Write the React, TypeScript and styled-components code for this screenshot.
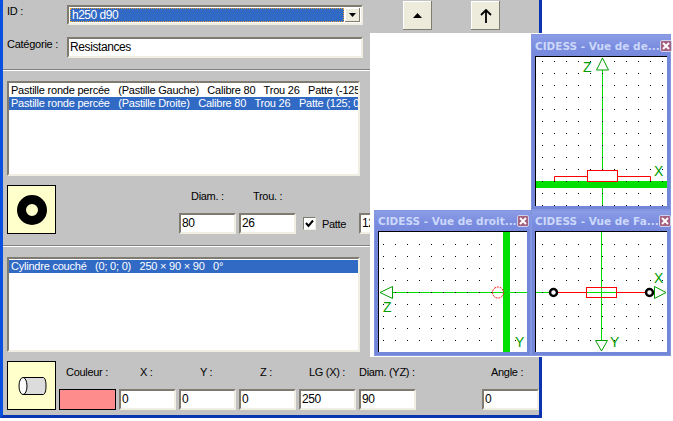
import React from 'react';
import styled, { createGlobalStyle } from 'styled-components';

const GlobalStyle = createGlobalStyle`
  html, body {
    margin: 0;
    padding: 0;
    background: #fff;
    overflow: hidden;
  }
  body {
    font-family: 'Liberation Sans', Arial, sans-serif;
    font-size: 11px;
    color: #000;
  }
`;

const Page = styled.div`
  position: relative;
  width: 673px;
  height: 421px;
  overflow: hidden;
`;

const MainWindow = styled.div`
  width: 542px;
  height: 418px;
  box-sizing: border-box;
  background: #c3c3c3;
  border-left: 3px solid #0a50e0;
  border-right: 3px solid #0a34b0;
  border-bottom: 3px solid #0a34b0;
  display: flex;
  flex-direction: column;
`;

const TopSection = styled.div`
  height: 69px;
  flex: none;
  box-sizing: border-box;
  padding: 1px 0 0 4px;
  display: flex;
  align-items: flex-start;
`;

const TopFields = styled.div`
  width: 356px;
  flex: none;
  margin-top: 4px;
  display: flex;
  flex-direction: column;
  gap: 12px;
`;

const Divider = styled.div`
  height: 1px;
  flex: none;
  background: #808080;
  border-bottom: 1px solid #fff;
`;

const FieldRow = styled.div`
  display: flex;
  align-items: center;
`;

const RowLabel = styled.span`
  width: 60px;
  flex: none;
  padding-bottom: 7px;
  line-height: 13px;
  letter-spacing: -0.25px;
`;

const Combo = styled.div`
  width: 296px;
  height: 20px;
  box-sizing: border-box;
  background: #fff;
  border: 2px solid;
  border-color: #7f7b70 #f0eee2 #f0eee2 #7f7b70;
  padding: 1px;
  display: flex;
`;

const ComboValue = styled.div`
  flex: 1;
  box-sizing: border-box;
  background: #316ac5;
  color: #fff;
  outline: 1px dotted #e8a030;
  outline-offset: -1px;
  font-size: 12px;
  letter-spacing: -0.5px;
  line-height: 14px;
  padding-left: 2px;
`;

const ComboArrow = styled.div`
  width: 15px;
  margin-left: 1px;
  background: #ecebdc;
  box-shadow: inset -1px -1px 0 #807c70, inset 1px 1px 0 #fff;
  display: flex;
  align-items: center;
  justify-content: center;
`;

const TextInput = styled.div<{ $w?: number }>`
  width: ${p => p.$w ?? 57}px;
  height: 21px;
  flex: none;
  box-sizing: border-box;
  background: #fff;
  border: 2px solid;
  border-color: #7f7b70 #f0eee2 #f0eee2 #7f7b70;
  padding-left: 1px;
  font-size: 12px;
  letter-spacing: -0.4px;
  line-height: 17px;
  white-space: nowrap;
  overflow: hidden;
`;

const ToolButtons = styled.div`
  margin-left: 40px;
  display: flex;
  gap: 39px;
`;

const ToolButton = styled.div`
  width: 29px;
  height: 29px;
  box-sizing: border-box;
  background: #ecebdc;
  box-shadow: inset -1px -1px 0 #807c70, inset 1px 1px 0 #fff;
  display: flex;
  align-items: center;
  justify-content: center;
`;

const ListSection = styled.div`
  padding: 10px 0 0 4px;
  flex: none;
`;

const ListBox = styled.div`
  width: 353px;
  height: 95px;
  box-sizing: border-box;
  background: #fff;
  border: 2px solid;
  border-color: #7f7b70 #f0eee2 #f0eee2 #7f7b70;
  padding-top: 1px;
  overflow: hidden;
`;

const ListRow = styled.div<{ $selected?: boolean }>`
  height: 13px;
  line-height: 13px;
  padding-left: 2px;
  font-size: 11px;
  letter-spacing: -0.22px;
  white-space: pre;
  overflow: hidden;
  background: ${p => (p.$selected ? '#316ac5' : 'transparent')};
  color: ${p => (p.$selected ? '#fff' : '#000')};
`;

const EditorRow = styled.div<{ $bottom?: number }>`
  display: flex;
  flex: none;
  padding: 9px 0 ${p => p.$bottom ?? 0}px 4px;
`;

const Thumb = styled.div`
  width: 49px;
  height: 49px;
  flex: none;
  box-sizing: border-box;
  background: #ffffcc;
  border: 1px solid #000;
  display: flex;
  align-items: center;
  justify-content: center;
`;

const FieldsColumn = styled.div`
  display: flex;
  flex-direction: column;
`;

const LabelRow = styled.div<{ $pad: number }>`
  display: flex;
  height: 28px;
  box-sizing: border-box;
  align-items: center;
  padding: 0 0 6px ${p => p.$pad}px;
`;

const LabelCell = styled.span<{ $w: number; $indent: number }>`
  width: ${p => p.$w}px;
  padding-left: ${p => p.$indent}px;
  box-sizing: border-box;
  flex: none;
  font-size: 11px;
  letter-spacing: -0.3px;
  white-space: nowrap;
`;

const InputRow = styled.div<{ $pad: number }>`
  display: flex;
  align-items: center;
  gap: 3px;
  padding-left: ${p => p.$pad}px;
`;

const CheckField = styled.label`
  display: flex;
  align-items: center;
  gap: 6px;
  width: 53px;
  flex: none;
  margin-left: 4px;
  font-size: 11px;
  letter-spacing: -0.3px;
`;

const CheckBox = styled.span`
  width: 13px;
  height: 13px;
  flex: none;
  box-sizing: border-box;
  background: #fff;
  border: 1px solid #f0eee2;
  border-top-color: #7f7b70;
  border-left-color: #7f7b70;
  display: flex;
  align-items: center;
  justify-content: center;
`;

const ColorSwatch = styled.div`
  width: 57px;
  height: 21px;
  flex: none;
  box-sizing: border-box;
  background: #ff8c8c;
  border: 1px solid #000;
`;

const Spacer = styled.div<{ $w: number }>`
  width: ${p => p.$w}px;
  flex: none;
`;

const ViewsPanel = styled.div`
  position: absolute;
  left: 370px;
  top: 33px;
  width: 303px;
  height: 324px;
  background: #fff;
`;

const ViewWindow = styled.div<{ $x: number; $y: number; $w: number }>`
  position: absolute;
  left: ${p => p.$x}px;
  top: ${p => p.$y}px;
  width: ${p => p.$w}px;
  box-sizing: border-box;
  background: #7387d8;
  border: 1px solid #8496e0;
  padding: 0 3px 3px;
  display: flex;
  flex-direction: column;
`;

const TitleBar = styled.div<{ $h: number }>`
  height: ${p => p.$h}px;
  flex: none;
  margin: 0 -3px;
  padding: 0 2px 0 3px;
  background: linear-gradient(180deg, #8b9de6 0%, #7a8cdf 60%, #7789dc 100%);
  display: flex;
  align-items: center;
  justify-content: space-between;
`;

const TitleText = styled.span`
  color: #ccd8fa;
  font-family: 'DejaVu Sans', sans-serif;
  font-weight: bold;
  font-size: 10.5px;
  white-space: nowrap;
`;

const CloseButton = styled.span`
  width: 12px;
  height: 12px;
  flex: none;
  box-sizing: border-box;
  border: 1px solid #cdd2ee;
  border-radius: 2px;
  background: #a4607e;
  display: flex;
  align-items: center;
  justify-content: center;
`;

const CanvasFrame = styled.div`
  background: #fff;
  border-top: 1px solid #000;
  border-left: 1px solid #000;
  svg {
    display: block;
  }
`;

const GREEN = '#00e000';
const DARK = '#009c00';

function Dots({ x0, y0, w, h }: { x0: number; y0: number; w: number; h: number }) {
  const dots: React.ReactNode[] = [];
  for (let x = x0; x < w; x += 12) {
    for (let y = y0; y < h; y += 12) {
      dots.push(<rect key={`${x}-${y}`} x={x} y={y} width={1} height={1} fill="#000" />);
    }
  }
  return <>{dots}</>;
}

function AxisLabel({ x, y, children }: { x: number; y: number; children: string }) {
  return (
    <text x={x} y={y} fill={DARK} fontFamily="Liberation Sans, sans-serif" fontSize={14}>
      {children}
    </text>
  );
}

function Window({
  title,
  x,
  y,
  w,
  barHeight,
  viewW,
  viewH,
  children,
}: {
  title: string;
  x: number;
  y: number;
  w: number;
  barHeight: number;
  viewW: number;
  viewH: number;
  children: React.ReactNode;
}) {
  return (
    <ViewWindow $x={x} $y={y} $w={w}>
      <TitleBar $h={barHeight}>
        <TitleText>{title}</TitleText>
        <CloseButton>
          <svg width="8" height="8" viewBox="0 0 8 8">
            <path d="M1 1L7 7M7 1L1 7" stroke="#fff" strokeWidth="2" />
          </svg>
        </CloseButton>
      </TitleBar>
      <CanvasFrame>
        <svg width={viewW} height={viewH} viewBox={`0 0 ${viewW} ${viewH}`}>
          {children}
        </svg>
      </CanvasFrame>
    </ViewWindow>
  );
}

export default function App() {
  return (
    <Page>
      <GlobalStyle />
      <MainWindow>
        <TopSection>
          <TopFields>
            <FieldRow>
              <RowLabel>ID :</RowLabel>
              <Combo>
                <ComboValue>h250 d90</ComboValue>
                <ComboArrow>
                  <svg width="7" height="4" viewBox="0 0 7 4">
                    <path d="M0 0H7L3.5 4Z" fill="#000" />
                  </svg>
                </ComboArrow>
              </Combo>
            </FieldRow>
            <FieldRow>
              <RowLabel>Catégorie :</RowLabel>
              <TextInput $w={296}>Resistances</TextInput>
            </FieldRow>
          </TopFields>
          <ToolButtons>
            <ToolButton>
              <svg width="9" height="5" viewBox="0 0 9 5">
                <path d="M4.5 0L9 5H0Z" fill="#000" />
              </svg>
            </ToolButton>
            <ToolButton>
              <svg width="12" height="14" viewBox="0 0 12 14">
                <path d="M6 14V1M1 6L6 1L11 6" stroke="#000" strokeWidth="1.8" fill="none" />
              </svg>
            </ToolButton>
          </ToolButtons>
        </TopSection>
        <Divider />
        <ListSection>
          <ListBox>
            <ListRow>{'Pastille ronde percée   (Pastille Gauche)   Calibre 80   Trou 26   Patte (-125; 0; 0)'}</ListRow>
            <ListRow $selected>{'Pastille ronde percée   (Pastille Droite)   Calibre 80   Trou 26   Patte (125; 0; 0)'}</ListRow>
          </ListBox>
        </ListSection>
        <EditorRow $bottom={11}>
          <Thumb>
            <svg width="36" height="36" viewBox="0 0 36 36">
              <circle cx="18" cy="18" r="10.5" fill="none" stroke="#000" strokeWidth="9" />
            </svg>
          </Thumb>
          <FieldsColumn>
            <LabelRow $pad={123}>
              <LabelCell $w={60} $indent={12}>Diam. :</LabelCell>
              <LabelCell $w={60} $indent={14}>Trou. :</LabelCell>
            </LabelRow>
            <InputRow $pad={123}>
              <TextInput>80</TextInput>
              <TextInput>26</TextInput>
              <CheckField>
                <CheckBox>
                  <svg width="9" height="9" viewBox="0 0 9 9">
                    <path d="M1 4L3.5 7L8 1.5" stroke="#000" strokeWidth="2" fill="none" />
                  </svg>
                </CheckBox>
                Patte
              </CheckField>
              <TextInput>125</TextInput>
            </InputRow>
          </FieldsColumn>
        </EditorRow>
        <Divider />
        <ListSection>
          <ListBox>
            <ListRow $selected>{'Cylindre couché   (0; 0; 0)   250 × 90 × 90   0°'}</ListRow>
          </ListBox>
        </ListSection>
        <EditorRow>
          <Thumb>
            <svg width="30" height="20" viewBox="0 0 30 20">
              <path d="M6 1.5H26C28 1.5 29 5 29 10C29 15 28 18.5 26 18.5H6Z" fill="#dcdcdc" stroke="#000" />
              <ellipse cx="6" cy="10" rx="4" ry="8.5" fill="#fff" stroke="#000" />
            </svg>
          </Thumb>
          <FieldsColumn>
            <LabelRow $pad={3}>
              <LabelCell $w={60} $indent={7}>Couleur :</LabelCell>
              <LabelCell $w={60} $indent={21}>X :</LabelCell>
              <LabelCell $w={60} $indent={21}>Y :</LabelCell>
              <LabelCell $w={60} $indent={21}>Z :</LabelCell>
              <LabelCell $w={60} $indent={10}>LG (X) :</LabelCell>
              <LabelCell $w={120} $indent={0}>Diam. (YZ) :</LabelCell>
              <LabelCell $w={60} $indent={12}>Angle :</LabelCell>
            </LabelRow>
            <InputRow $pad={3}>
              <ColorSwatch />
              <TextInput>0</TextInput>
              <TextInput>0</TextInput>
              <TextInput>0</TextInput>
              <TextInput>250</TextInput>
              <TextInput>90</TextInput>
              <Spacer $w={60} />
              <TextInput>0</TextInput>
            </InputRow>
          </FieldsColumn>
        </EditorRow>
      </MainWindow>

      <ViewsPanel>
        <Window title="CIDESS - Vue de de..." x={161} y={1} w={140} barHeight={21} viewW={131} viewH={149}>
          <path d="M66.5 13V149" stroke={GREEN} />
          <rect x={0} y={124} width={131} height={7} fill={GREEN} />
          <Dots x0={6} y0={4} w={131} h={149} />
          <path d="M66.5 1L60.5 13H72.5Z" fill="#fff" stroke={DARK} />
          <rect x={51.5} y={113.5} width={30} height={11} fill="#fff" stroke="#f00" />
          <path d="M51 119.5H18.5V124M82 119.5H114.5V124" fill="none" stroke="#f00" />
          <AxisLabel x={47} y={15}>Z</AxisLabel>
          <AxisLabel x={118} y={119}>X</AxisLabel>
        </Window>
        <Window title="CIDESS - Vue de droit..." x={4} y={177} w={157} barHeight={20} viewW={148} viewH={120}>
          <path d="M13 60.5H148" stroke={GREEN} />
          <Dots x0={4} y0={12} w={148} h={120} />
          <rect x={124} y={0} width={7} height={120} fill={GREEN} />
          <path d="M1 60.5L13.5 54.5V66.5Z" fill="#fff" stroke={DARK} />
          <circle cx={119} cy={60.5} r={5.5} fill="none" stroke="#f00" strokeDasharray="2 1" />
          <AxisLabel x={4} y={80}>Z</AxisLabel>
          <AxisLabel x={136} y={115}>Y</AxisLabel>
        </Window>
        <Window title="CIDESS - Vue de Fa..." x={161} y={177} w={140} barHeight={20} viewW={131} viewH={120}>
          <path d="M65.5 0V108M0 60.5H118" stroke={GREEN} />
          <Dots x0={6} y0={12} w={131} h={120} />
          <path d="M17.5 60.5H113.5" stroke="#f00" />
          <rect x={50.5} y={55.5} width={30} height={10} fill="none" stroke="#f00" />
          <path d="M65.5 56V65M51 60.5H80" stroke={GREEN} />
          <circle cx={17.5} cy={60.5} r={3.5} fill="#fff" stroke="#000" strokeWidth={2.5} />
          <circle cx={113.5} cy={60.5} r={3.5} fill="#fff" stroke="#000" strokeWidth={2.5} />
          <path d="M130 60.5L118.5 54.5V66.5Z" fill="#fff" stroke={DARK} />
          <path d="M65.5 119L59.5 108.5H71.5Z" fill="#fff" stroke={DARK} />
          <AxisLabel x={118} y={51}>X</AxisLabel>
          <AxisLabel x={74} y={115}>Y</AxisLabel>
        </Window>
      </ViewsPanel>
    </Page>
  );
}
